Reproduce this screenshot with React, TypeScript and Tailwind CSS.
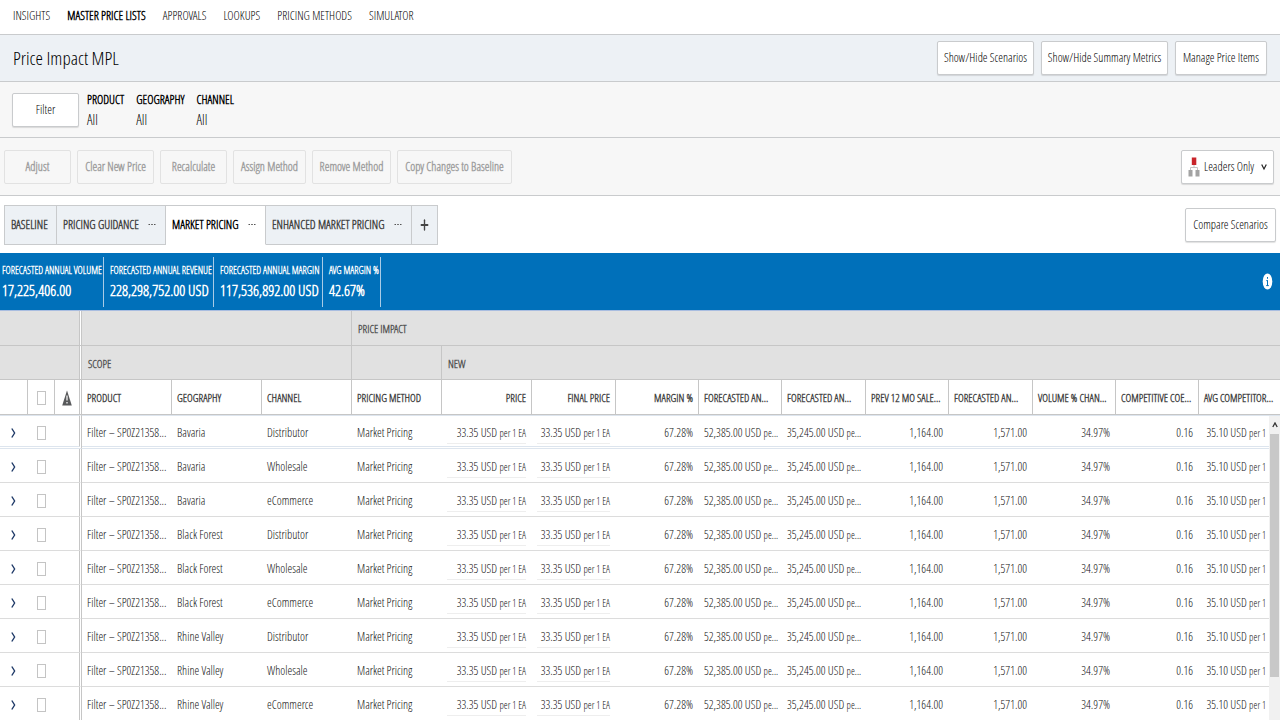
import React, { useState } from 'react';
import { Plus } from 'lucide-react';
import clsx from 'clsx';

const NAV_ITEMS = ['INSIGHTS', 'MASTER PRICE LISTS', 'APPROVALS', 'LOOKUPS', 'PRICING METHODS', 'SIMULATOR'];
const ACTIVE_NAV_ITEM = 'MASTER PRICE LISTS';

const FILTERS = [
  { name: 'PRODUCT', value: 'All' },
  { name: 'GEOGRAPHY', value: 'All' },
  { name: 'CHANNEL', value: 'All' },
];

const ACTIONS = [
  { label: 'Adjust', className: 'w-[67px]' },
  { label: 'Clear New Price', className: 'w-[77px]' },
  { label: 'Recalculate', className: 'w-[67px]' },
  { label: 'Assign Method', className: 'w-[73px]' },
  { label: 'Remove Method', className: 'w-[79px]' },
  { label: 'Copy Changes to Baseline', className: 'w-[115px]' },
];

const SCENARIOS = [
  { label: 'BASELINE', hasMenu: false, className: 'w-[52px]' },
  { label: 'PRICING GUIDANCE', hasMenu: true, className: 'w-[109px]' },
  { label: 'MARKET PRICING', hasMenu: true, className: 'w-[100px]' },
  { label: 'ENHANCED MARKET PRICING', hasMenu: true, className: 'w-[146px]' },
];

const METRICS = [
  { label: 'FORECASTED ANNUAL VOLUME', value: '17,225,406.00', className: 'w-[104px] pl-0.5' },
  { label: 'FORECASTED ANNUAL REVENUE', value: '228,298,752.00 USD', className: 'w-[110px] pl-1.5' },
  { label: 'FORECASTED ANNUAL MARGIN', value: '117,536,892.00 USD', className: 'w-[109px] pl-1.5' },
  { label: 'AVG MARGIN %', value: '42.67%', className: 'w-[58px] pl-1.5' },
];

type Column = { label: string; width: string; right?: boolean };

const COLUMNS: Column[] = [
  { label: 'PRODUCT', width: 'w-[90px]' },
  { label: 'GEOGRAPHY', width: 'w-[90px]' },
  { label: 'CHANNEL', width: 'w-[90px]' },
  { label: 'PRICING METHOD', width: 'w-[90px]' },
  { label: 'PRICE', width: 'w-[90px]', right: true },
  { label: 'FINAL PRICE', width: 'w-[84px]', right: true },
  { label: 'MARGIN %', width: 'w-[83px]', right: true },
  { label: 'FORECASTED AN...', width: 'w-[83px]' },
  { label: 'FORECASTED AN...', width: 'w-[84px]' },
  { label: 'PREV 12 MO SALE...', width: 'w-[83px]' },
  { label: 'FORECASTED AN...', width: 'w-[84px]' },
  { label: 'VOLUME % CHAN...', width: 'w-[83px]' },
  { label: 'COMPETITIVE COE...', width: 'w-[83px]' },
  { label: 'AVG COMPETITOR...', width: 'w-auto' },
];

const REGIONS = ['Bavaria', 'Black Forest', 'Rhine Valley'];
const CHANNELS = ['Distributor', 'Wholesale', 'eCommerce'];

const ROWS = REGIONS.flatMap((geography) => CHANNELS.map((channel) => ({ geography, channel })));

const buttonClass =
  'h-[34px] shrink-0 rounded-xs border border-[#c9cbcd] bg-white text-[12px] text-black shadow-[0_1px_1px_rgba(0,0,0,0.12)] whitespace-nowrap';

const WarningIcon = () => (
  <svg className="mx-auto block h-4 w-[10px]" viewBox="0 0 10 16" role="img" aria-label="Warnings">
    <path d="M5 0.5 L9.8 15.5 H0.2 Z" fill="#58595b" />
    <path d="M5 5.5 V10.5 M5 12 V13.6" stroke="#fff" strokeWidth="1.2" />
  </svg>
);

const HierarchyIcon = () => (
  <svg className="h-5 w-3 shrink-0" viewBox="0 0 12 20" aria-hidden="true">
    <path d="M6 8 V10.5 M2.5 14 V10.5 H9.5 V14" fill="none" stroke="#c4c4c4" />
    <rect x="3.8" y="0.5" width="4.5" height="7.5" fill="#c9252b" />
    <rect x="0.5" y="13" width="4" height="6.5" fill="#a3a3a3" />
    <rect x="7.5" y="13" width="4" height="6.5" fill="#a3a3a3" />
  </svg>
);

const RowChevron = () => (
  <svg className="mx-auto block h-3 w-[5px]" viewBox="0 0 5 12" aria-hidden="true">
    <path d="M0.8 1.5 L3.6 6 L0.8 10.5" fill="none" stroke="#1f3a68" strokeWidth="1.4" />
  </svg>
);

const Dots = () => (
  <svg className="h-[3px] w-2 shrink-0" viewBox="0 0 8 3" aria-hidden="true">
    <path d="M0.5 1.5 H2 M3.2 1.5 H4.8 M6 1.5 H7.5" stroke="#555" strokeWidth="1.2" />
  </svg>
);

const Checkbox = ({ label }: { label: string }) => (
  <input
    type="checkbox"
    aria-label={label}
    className="mx-auto block h-[14px] w-[9px] appearance-none border border-[#c4c4c4] bg-white checked:bg-[#0070ba]"
  />
);

const UnitPrice = ({ amount, unit }: { amount: string; unit: string }) => (
  <>
    {amount} <span className="text-[10px]">{unit}</span>
  </>
);

const App = () => {
  const [scenario, setScenario] = useState('MARKET PRICING');

  const groupCell =
    'border-b border-r border-[#c6c6c6] bg-[#e1e1e1] px-1.5 pt-0.5 text-left text-[11px] font-bold text-[#555] last:border-r-0';
  const headCell =
    'h-[35px] border-b border-r border-[#c6c6c6] bg-white px-[5px] pt-0.5 text-[11px] font-bold text-[#444] last:border-r-0';
  const pinned = 'border-r-[3px] [border-right-style:double] border-r-[#c6c6c6] bg-clip-padding';

  return (
    <div className="flex h-screen flex-col overflow-hidden bg-white font-['Open_Sans_Condensed_Light','Open_Sans',sans-serif] text-[12px] leading-4 text-black">
      <nav className="flex h-[35px] shrink-0 items-center gap-[17px] border-b border-[#c9cbcd] px-[13px] pb-0.5">
        {NAV_ITEMS.map((item) => (
          <a
            key={item}
            href="#"
            className={clsx('whitespace-nowrap text-black', item === ACTIVE_NAV_ITEM && 'font-bold')}
          >
            {item}
          </a>
        ))}
      </nav>

      <header className="flex h-[47px] shrink-0 items-center border-b border-[#c9cbcd] bg-[#edf1f5] pr-[13px] pl-[13px]">
        <h1 className="text-[19px] leading-7">Price Impact MPL</h1>
        <div className="ml-auto flex gap-[7px]">
          <button type="button" className={clsx(buttonClass, 'w-[97px]')}>
            Show/Hide Scenarios
          </button>
          <button type="button" className={clsx(buttonClass, 'w-[127px]')}>
            Show/Hide Summary Metrics
          </button>
          <button type="button" className={clsx(buttonClass, 'w-[92px]')}>
            Manage Price Items
          </button>
        </div>
      </header>

      <section className="flex h-14 shrink-0 items-center gap-2 border-b border-[#c9cbcd] bg-[#f7f7f7] px-3">
        <button type="button" className={clsx(buttonClass, 'w-[67px]')}>
          Filter
        </button>
        <dl className="flex gap-3">
          {FILTERS.map(({ name, value }) => (
            <div key={name} className="flex flex-col gap-1">
              <dt className="font-bold">{name}</dt>
              <dd className="text-[14px]">{value}</dd>
            </div>
          ))}
        </dl>
      </section>

      <section className="flex h-[58px] shrink-0 items-center gap-1.5 border-b border-[#c9cbcd] bg-[#f7f7f7] pr-1.5 pl-1">
        {ACTIONS.map(({ label, className }) => (
          <button
            key={label}
            type="button"
            disabled
            className={clsx(
              'h-[34px] shrink-0 rounded-xs border border-[#e2e2e2] font-bold whitespace-nowrap text-[#a0a0a0]',
              className,
            )}
          >
            {label}
          </button>
        ))}
        <label className={clsx(buttonClass, 'ml-auto flex w-[93px] items-center gap-1 px-1.5')}>
          <HierarchyIcon />
          <select aria-label="Price items shown" className="w-[54px] appearance-none bg-transparent outline-none">
            <option>Leaders Only</option>
            <option>All Items</option>
          </select>
          <svg className="h-2 w-1.5 shrink-0" viewBox="0 0 6 8" aria-hidden="true">
            <path d="M0.7 1.5 L3 6 L5.3 1.5" fill="none" stroke="#222" strokeWidth="1.2" />
          </svg>
        </label>
      </section>

      <section className="flex h-[57px] shrink-0 items-center pr-1 pl-1">
        <div role="tablist" className="flex h-10 border-l border-[#c9cbcd]">
          {SCENARIOS.map(({ label, hasMenu, className }) => (
            <button
              key={label}
              type="button"
              role="tab"
              aria-selected={label === scenario}
              onClick={() => setScenario(label)}
              className={clsx(
                'flex items-center justify-between border-t border-r border-b border-t-[#c9cbcd] border-r-[#c9cbcd] pr-[9px] pl-1.5 font-bold whitespace-nowrap',
                label === scenario
                  ? 'border-b-transparent bg-white text-black'
                  : 'border-b-[#c9cbcd] bg-[#edf1f5] text-[#444]',
                className,
              )}
            >
              {label}
              {hasMenu && <Dots />}
            </button>
          ))}
          <button
            type="button"
            aria-label="Add scenario"
            className="flex w-[26px] items-center justify-center border-t border-r border-b border-[#c9cbcd] bg-[#edf1f5] text-[#444]"
          >
            <Plus className="h-4 w-[11px]" preserveAspectRatio="none" strokeWidth={3} />
          </button>
        </div>
        <button type="button" className={clsx(buttonClass, 'ml-auto w-[91px]')}>
          Compare Scenarios
        </button>
      </section>

      <section className="flex h-[58px] shrink-0 items-center border-b border-[#a9bde0] bg-[#0070ba] pr-[7px] text-white">
        <dl className="flex">
          {METRICS.map(({ label, value, className }) => (
            <div key={label} className={clsx('h-[50px] border-r border-[#a9cbe6] pt-[5px] whitespace-nowrap', className)}>
              <dt className="text-[10px] font-bold">{label}</dt>
              <dd className="text-[15px] leading-6 font-bold">{value}</dd>
            </div>
          ))}
        </dl>
        <button type="button" aria-label="Metric details" className="ml-auto">
          <svg className="block h-[17px] w-[11px]" viewBox="0 0 11 17">
            <ellipse cx="5.5" cy="8.5" rx="4.8" ry="8" fill="#fff" />
            <path d="M5.5 4 V5.8 M5.5 7.2 V12.5 M4.3 7.6 H5.5 M4.2 12.6 H6.8" stroke="#0070ba" strokeWidth="1" />
          </svg>
        </button>
      </section>

      <main className="relative min-h-0 flex-1 overflow-hidden">
        <table className="w-full table-fixed border-separate border-spacing-0">
          <colgroup>
            <col className="w-[28px]" />
            <col className="w-[27px]" />
            <col className="w-[27px]" />
            {COLUMNS.map(({ width }, index) => (
              <col key={index} className={width} />
            ))}
          </colgroup>
          <thead>
            <tr className="h-[35px]">
              <th colSpan={3} className={clsx(groupCell, pinned)} />
              <th colSpan={3} className={groupCell} />
              <th colSpan={11} className={groupCell}>
                PRICE IMPACT
              </th>
            </tr>
            <tr className="h-[34px]">
              <th colSpan={3} className={clsx(groupCell, pinned)} />
              <th colSpan={3} className={groupCell}>
                SCOPE
              </th>
              <th className={groupCell} />
              <th colSpan={10} className={groupCell}>
                NEW
              </th>
            </tr>
            <tr>
              <th className={headCell} />
              <th className={headCell}>
                <Checkbox label="Select all rows" />
              </th>
              <th className={clsx(headCell, pinned)}>
                <WarningIcon />
              </th>
              {COLUMNS.map(({ label, right }, index) => (
                <th
                  key={index}
                  className={clsx(headCell, 'whitespace-nowrap', right ? 'text-right' : 'text-left')}
                >
                  {label}
                </th>
              ))}
            </tr>
          </thead>
          <tbody className="whitespace-nowrap text-[#111]">
            {ROWS.map(({ geography, channel }, index) => {
              // the first row has the focus, shown as a pale double rule
              const bodyCell = clsx(
                'h-[34px] pr-1.5 pl-[5px]',
                index === 0
                  ? 'border-t border-b-[3px] border-[#dde5ee] pt-1 [border-bottom-style:double]'
                  : 'border-b border-[#dcdcdc] pt-0.5',
              );
              return (
                <tr key={index}>
                  <td className={bodyCell}>
                    <button type="button" aria-label="Expand row" className="mx-auto block">
                      <RowChevron />
                    </button>
                  </td>
                  <td className={bodyCell}>
                    <Checkbox label={`Select ${geography} ${channel}`} />
                  </td>
                  <td className={clsx(bodyCell, pinned)} />
                  <td className={bodyCell}>Filter – SP0Z21358...</td>
                  <td className={bodyCell}>{geography}</td>
                  <td className={bodyCell}>{channel}</td>
                  <td className={bodyCell}>Market Pricing</td>
                  <td className={clsx(bodyCell, 'text-right')}>
                    <div className="border-b border-[#eeeeee] pt-[3px] pb-0.5">
                      <UnitPrice amount="33.35 USD" unit="per 1 EA" />
                    </div>
                  </td>
                  <td className={clsx(bodyCell, 'text-right')}>
                    <div className="border-b border-[#eeeeee] pt-[3px] pb-0.5">
                      <UnitPrice amount="33.35 USD" unit="per 1 EA" />
                    </div>
                  </td>
                  <td className={clsx(bodyCell, 'text-right')}>67.28%</td>
                  <td className={bodyCell}>
                    <UnitPrice amount="52,385.00 USD" unit="pe..." />
                  </td>
                  <td className={bodyCell}>
                    <UnitPrice amount="35,245.00 USD" unit="pe..." />
                  </td>
                  <td className={clsx(bodyCell, 'text-right')}>1,164.00</td>
                  <td className={clsx(bodyCell, 'text-right')}>1,571.00</td>
                  <td className={clsx(bodyCell, 'text-right')}>34.97%</td>
                  <td className={clsx(bodyCell, 'text-right')}>0.16</td>
                  <td className={clsx(bodyCell, 'text-right')}>
                    <div className="pr-2">
                      <UnitPrice amount="35.10 USD" unit="per 1" />
                    </div>
                  </td>
                </tr>
              );
            })}
          </tbody>
        </table>

        {/* scrollbar track, laid over the last column */}
        <div className="absolute top-[105px] right-0 bottom-0 flex w-[11px] flex-col bg-[#f1f1f1]">
          <div className="flex h-[18px] shrink-0 items-center justify-center">
            <svg className="h-1.5 w-1.5" viewBox="0 0 6 6" aria-hidden="true">
              <path d="M0.8 5 L3 1 L5.2 5" fill="none" stroke="#333" strokeWidth="1.3" />
            </svg>
          </div>
          <div className="mx-px h-4/5 bg-[#c8c8c8]" />
        </div>
      </main>
    </div>
  );
};

export default App;
